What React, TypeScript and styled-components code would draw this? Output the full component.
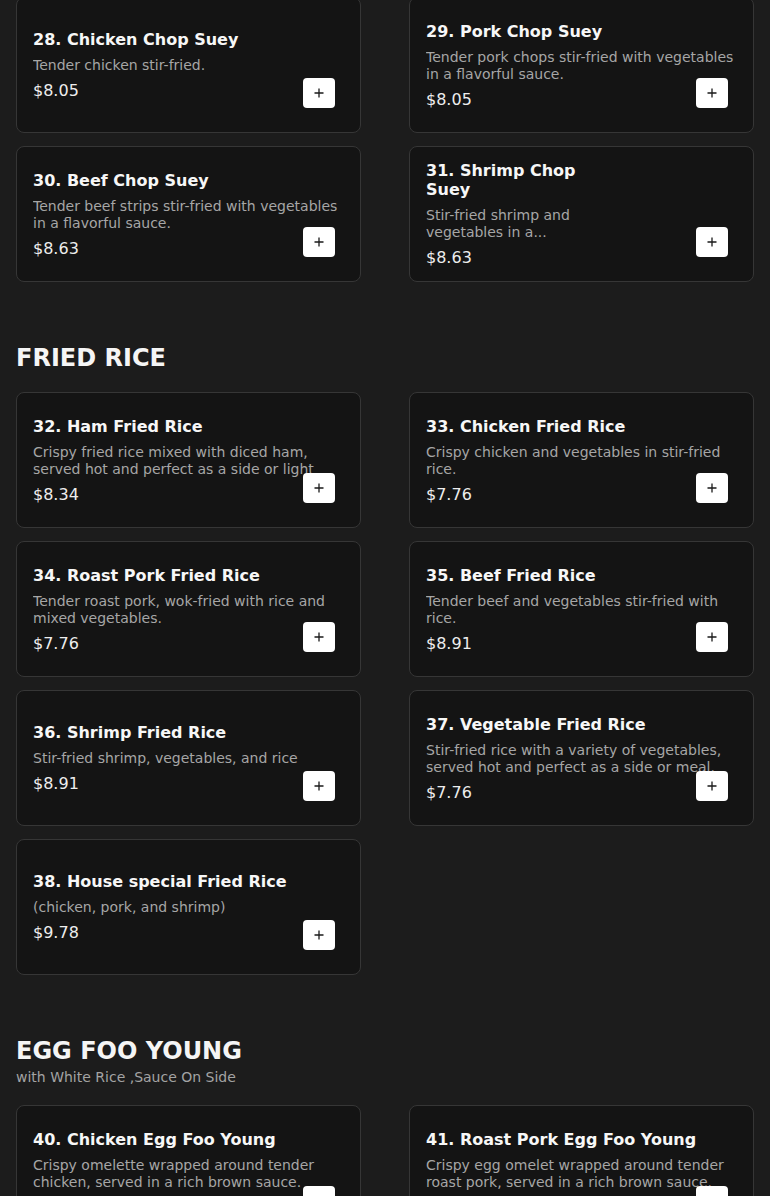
import React from 'react';
import styled, { createGlobalStyle } from 'styled-components';

const GlobalStyle = createGlobalStyle`
  html, body {
    margin: 0;
    padding: 0;
    background: #1c1c1c;
    color: #f2f2f2;
    font-family: 'DejaVu Sans', sans-serif;
  }
`;

type Item = {
  name: string;
  description: string;
  price: string;
  narrow?: boolean;
};

type Section = {
  title?: string;
  subtitle?: string;
  items: Item[];
};

const sections: Section[] = [
  {
    items: [
      { name: '28. Chicken Chop Suey', description: 'Tender chicken stir-fried.', price: '$8.05' },
      {
        name: '29. Pork Chop Suey',
        description: 'Tender pork chops stir-fried with vegetables in a flavorful sauce.',
        price: '$8.05',
      },
      {
        name: '30. Beef Chop Suey',
        description: 'Tender beef strips stir-fried with vegetables in a flavorful sauce.',
        price: '$8.63',
      },
      {
        name: '31. Shrimp Chop Suey',
        description: 'Stir-fried shrimp and vegetables in a...',
        price: '$8.63',
        narrow: true,
      },
    ],
  },
  {
    title: 'FRIED RICE',
    items: [
      {
        name: '32. Ham Fried Rice',
        description: 'Crispy fried rice mixed with diced ham, served hot and perfect as a side or light meal.',
        price: '$8.34',
      },
      {
        name: '33. Chicken Fried Rice',
        description: 'Crispy chicken and vegetables in stir-fried rice.',
        price: '$7.76',
      },
      {
        name: '34. Roast Pork Fried Rice',
        description: 'Tender roast pork, wok-fried with rice and mixed vegetables.',
        price: '$7.76',
      },
      {
        name: '35. Beef Fried Rice',
        description: 'Tender beef and vegetables stir-fried with rice.',
        price: '$8.91',
      },
      {
        name: '36. Shrimp Fried Rice',
        description: 'Stir-fried shrimp, vegetables, and rice',
        price: '$8.91',
      },
      {
        name: '37. Vegetable Fried Rice',
        description: 'Stir-fried rice with a variety of vegetables, served hot and perfect as a side or meal.',
        price: '$7.76',
      },
      {
        name: '38. House special Fried Rice',
        description: '(chicken, pork, and shrimp)',
        price: '$9.78',
      },
    ],
  },
  {
    title: 'EGG FOO YOUNG',
    subtitle: 'with White Rice ,Sauce On Side',
    items: [
      {
        name: '40. Chicken Egg Foo Young',
        description: 'Crispy omelette wrapped around tender chicken, served in a rich brown sauce.',
        price: '$9.20',
      },
      {
        name: '41. Roast Pork Egg Foo Young',
        description: 'Crispy egg omelet wrapped around tender roast pork, served in a rich brown sauce.',
        price: '$9.20',
      },
    ],
  },
];

// page is shown scrolled: the first row starts a few px above the fold
const Page = styled.main`
  padding: 0 16px 40px;
  margin-top: -3px;
`;

const SectionBlock = styled.section`
  & + & {
    margin-top: 62px;
  }
`;

const SectionHeader = styled.header`
  margin-bottom: 19px;
`;

const SectionTitle = styled.h2`
  margin: 0;
  font-size: 24px;
  line-height: 29px;
  font-weight: 700;
  color: #f5f5f5;
`;

const SectionSubtitle = styled.p`
  margin: 3px 0 0;
  font-size: 14px;
  line-height: 17px;
  color: #a3a3a3;
`;

const Grid = styled.div`
  display: grid;
  grid-template-columns: 1fr 1fr;
  column-gap: 48px;
  row-gap: 13px;
`;

const Card = styled.article`
  position: relative;
  box-sizing: border-box;
  height: 136px;
  padding: 0 16px;
  display: flex;
  align-items: center;
  background: #141414;
  border: 1px solid #363636;
  border-radius: 8px;
`;

const Info = styled.div<{ $narrow?: boolean }>`
  width: 100%;
  max-width: ${(p) => (p.$narrow ? '170px' : 'none')};
`;

const ItemName = styled.h3`
  margin: 0 0 8px;
  font-size: 16px;
  line-height: 19px;
  font-weight: 700;
  color: #f7f7f7;
`;

const Description = styled.p`
  margin: 0 0 7px;
  font-size: 14px;
  line-height: 17px;
  max-height: 34px;
  overflow: hidden;
  color: #a6a6a6;
`;

const Price = styled.div`
  font-size: 16px;
  line-height: 19px;
  color: #ededed;
`;

const AddButton = styled.button`
  position: absolute;
  right: 25px;
  bottom: 24px;
  width: 32px;
  height: 30px;
  padding: 0;
  border: none;
  border-radius: 4px;
  background: #ffffff;
  color: #1a1a1a;
  display: flex;
  align-items: center;
  justify-content: center;
  cursor: pointer;
`;

const PlusIcon = () => (
  <svg width="10" height="10" viewBox="0 0 10 10" aria-hidden="true">
    <path d="M5 0.5v9M0.5 5h9" stroke="currentColor" strokeWidth="1.3" fill="none" />
  </svg>
);

const MenuCard = ({ item }: { item: Item }) => (
  <Card>
    <Info $narrow={item.narrow}>
      <ItemName>{item.name}</ItemName>
      <Description>{item.description}</Description>
      <Price>{item.price}</Price>
    </Info>
    <AddButton aria-label={`Add ${item.name}`}>
      <PlusIcon />
    </AddButton>
  </Card>
);

const App = () => {
  return (
    <>
      <GlobalStyle />
      <Page>
        {sections.map((section, i) => (
          <SectionBlock key={i}>
            {section.title && (
              <SectionHeader>
                <SectionTitle>{section.title}</SectionTitle>
                {section.subtitle && <SectionSubtitle>{section.subtitle}</SectionSubtitle>}
              </SectionHeader>
            )}
            <Grid>
              {section.items.map((item) => (
                <MenuCard key={item.name} item={item} />
              ))}
            </Grid>
          </SectionBlock>
        ))}
      </Page>
    </>
  );
};

export default App;
